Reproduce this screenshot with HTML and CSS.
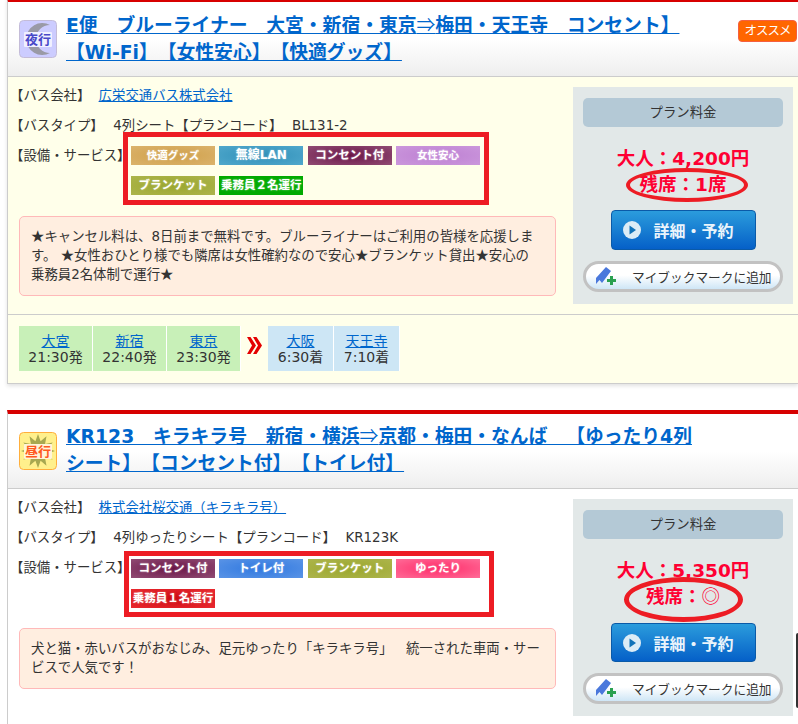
FILE: index.html
```html
<!DOCTYPE html>
<html lang="ja">
<head>
<meta charset="utf-8">
<title>バスプラン一覧</title>
<link rel="stylesheet" href="styles.css">
</head>
<body>
<section class="card card--first">
  <header class="head">
    <svg class="kind" viewBox="0 0 38 38" aria-hidden="true">
      <rect x="0.5" y="0.5" width="37" height="37" rx="4" fill="#ccccff" stroke="#c4bcd8"/>
      <path d="M31 5 A16 16 0 1 0 31 33 A13 13 0 0 1 31 5Z" fill="#9a9aa6"/>
      <rect x="5" y="12" width="28" height="15" rx="1" fill="#f0f0ff"/>
      <text x="19" y="24" class="kind-text kind-text--night">夜行</text>
    </svg>
    <h2 class="title"><a href="#">E便　ブルーライナー　大宮・新宿・東京<span class="cjk cjk--thin">⇒</span>梅田・天王寺　コンセント】【Wi-Fi】【女性安心】【快適グッズ】</a></h2>
    <span class="badge">オススメ</span>
  </header>
  <div class="body">
    <div class="info">
      <p class="row row--company">【バス会社】 <a class="company" href="#">広栄交通バス株式会社</a></p>
      <p class="row row--type">【バスタイプ】<span class="gap"></span>4列シート【プランコード】<span class="gap"></span>BL131-2</p>
      <div class="service">
        <span class="service-label">【設備・サービス】</span>
        <div class="mark mark--one">
          <span class="tag tag--goods">快適グッズ</span>
          <span class="tag tag--lan">無線LAN</span>
          <span class="tag tag--plug">コンセント付</span>
          <span class="tag tag--women">女性安心</span>
          <span class="tag tag--blanket">ブランケット</span>
          <span class="tag tag--crew2">乗務員２名運行</span>
        </div>
      </div>
      <p class="note note--one"><span class="cjk">★</span>キャンセル料は、8日前まで無料です。ブルーライナーはご利用の皆様を応援します。 <span class="cjk">★</span>女性おひとり様でも隣席は女性確約なので安心<span class="cjk">★</span>ブランケット貸出<span class="cjk">★</span>安心の乗務員2名体制で運行<span class="cjk">★</span></p>
    </div>
    <aside class="plan">
      <div class="plan-label">プラン料金</div>
      <div class="price">大人：4,200円</div>
      <div class="seats">残席：1席</div>
      <span class="ring ring--one"></span>
      <a class="reserve" href="#">
        <svg class="play" viewBox="0 0 18 18" aria-hidden="true"><circle cx="9" cy="9" r="9" fill="#dcecf6"/><path d="M6.5 4.5 L13 9 L6.5 13.5Z" fill="#1273b8"/></svg>
        <span>詳細・予約</span>
      </a>
      <a class="bookmark" href="#">
        <svg class="pen" viewBox="0 0 22 22" aria-hidden="true"><path d="M2 12 L12 1 L17 5 L8 17 L5.500 14 L2 18Z" fill="#4a78dc"/><path d="M13 13h3v-3h3v3h3v3h-3v3h-3v-3h-3z" fill="#2aa050"/></svg>
        <span>マイブックマークに追加</span>
      </a>
    </aside>
  </div>
  <div class="route">
    <div class="stop stop--from"><a href="#">大宮</a><span>21:30発</span></div>
    <div class="stop stop--from"><a href="#">新宿</a><span>22:40発</span></div>
    <div class="stop stop--from"><a href="#">東京</a><span>23:30発</span></div>
    <svg class="arrow" viewBox="0 0 15 17" aria-hidden="true"><path d="M0 0h3.5L9 8.5 3.500 17H0l5-8.500z M6 0h3.500L15 8.500 9.500 17H6l5-8.500z" fill="#e40000"/></svg>
    <div class="stop stop--to"><a href="#">大阪</a><span>6:30着</span></div>
    <div class="stop stop--to"><a href="#">天王寺</a><span>7:10着</span></div>
  </div>
</section>

<section class="card card--second">
  <header class="head head--tight">
    <svg class="kind" viewBox="0 0 38 38" aria-hidden="true">
      <rect x="0.5" y="0.5" width="37" height="37" rx="4" fill="#fff08c" stroke="#ffae3c"/>
      <polygon points="36,19 28.66,21.59 33.7,27.5 26.07,26.07 27.5,33.7 21.59,28.66 19,36 16.41,28.66 10.5,33.7 11.93,26.07 4.3,27.5 9.34,21.59 2,19 9.34,16.41 4.3,10.5 11.93,11.93 10.5,4.3 16.41,9.34 19,2 21.59,9.34 27.5,4.3 26.07,11.93 33.7,10.5 28.66,16.41" fill="#a8a850"/>
      <rect x="5" y="12" width="28" height="15" rx="1" fill="#fff4d8"/>
      <text x="19" y="24" class="kind-text kind-text--day">昼行</text>
    </svg>
    <h2 class="title"><a href="#">KR123　キラキラ号　新宿・横浜<span class="cjk cjk--thin">⇒</span>京都・梅田・なんば　【ゆったり4列シート】【コンセント付】【トイレ付】</a></h2>
  </header>
  <div class="body body--white">
    <div class="info">
      <p class="row row--company">【バス会社】 <a class="company" href="#">株式会社桜交通（キラキラ号）</a></p>
      <p class="row row--type">【バスタイプ】<span class="gap"></span>4列ゆったりシート【プランコード】<span class="gap"></span>KR123K</p>
      <div class="service">
        <span class="service-label">【設備・サービス】</span>
        <div class="mark mark--two">
          <span class="tag tag--plug">コンセント付</span>
          <span class="tag tag--toilet">トイレ付</span>
          <span class="tag tag--blanket">ブランケット</span>
          <span class="tag tag--relax">ゆったり</span>
          <span class="tag tag--crew1">乗務員１名運行</span>
        </div>
      </div>
      <p class="note note--two">犬と猫・赤いバスがおなじみ、足元ゆったり「キラキラ号」　統一された車両・サービスで人気です！</p>
    </div>
    <aside class="plan">
      <div class="plan-label">プラン料金</div>
      <div class="price">大人：5,350円</div>
      <div class="seats">残席：<span class="cjk cjk--thin">◎</span></div>
      <span class="ring ring--two"></span>
      <a class="reserve reserve--short" href="#">
        <svg class="play" viewBox="0 0 18 18" aria-hidden="true"><circle cx="9" cy="9" r="9" fill="#dcecf6"/><path d="M6.500 4.500 L13 9 L6.500 13.500Z" fill="#1273b8"/></svg>
        <span>詳細・予約</span>
      </a>
      <a class="bookmark" href="#">
        <svg class="pen" viewBox="0 0 22 22" aria-hidden="true"><path d="M2 12 L12 1 L17 5 L8 17 L5.500 14 L2 18Z" fill="#4a78dc"/><path d="M13 13h3v-3h3v3h3v3h-3v3h-3v-3h-3z" fill="#2aa050"/></svg>
        <span>マイブックマークに追加</span>
      </a>
    </aside>
  </div>
</section>
<span class="edge"></span>
</body>
</html>
```
FILE: styles.css
```css
html, body {
  margin: 0;
  height: 724px;
  overflow: hidden;
  background: #fff;
}
body {
  position: relative;
  font-family: "DejaVu Sans", "Noto Sans CJK JP", sans-serif;
  font-size: 13.4px;
  color: #333;
  text-spacing-trim: space-all;
}
a { color: #0066cc; }
p { margin: 0; }
.cjk { font-family: "Noto Sans CJK JP", sans-serif; line-height: 0; }
.cjk--thin { font-weight: 400; }
.gap { display: inline-block; width: 9.500px; }

.card {
  margin-left: 7px;
  border-left: 1px solid #ccc;
  border-top: 4px solid #d70000;
}
.card--first {
  margin-top: -2px;
  border-bottom: 1px solid #ccc;
  box-shadow: 0 2px 4px rgba(0, 0, 0, 0.12);
}
.card--second { margin-top: 26px; }

.head {
  display: flex;
  align-items: flex-start;
  height: 75px;
  box-sizing: border-box;
  padding: 10px 1px 0 11px;
  background: linear-gradient(#fff 50%, #eee);
  border-bottom: 1px solid #ccc;
}
.head--tight { padding-top: 9px; }
.kind {
  flex: none;
  width: 38px;
  height: 38px;
  margin: 8px 9px 0 0;
}
.head--tight .kind { margin-top: 9px; }
.kind-text {
  font-size: 13px;
  font-weight: 700;
  text-anchor: middle;
}
.kind-text--night { fill: #4848c8; }
.kind-text--day { fill: #ff5a20; }
.title {
  flex: none;
  width: 632px;
  margin: 0;
  font-size: 18.800px;
  line-height: 27px;
  font-weight: 700;
}
.badge {
  margin: 8px 0 0 auto;
  width: 59px;
  height: 22px;
  box-sizing: border-box;
  border: 1px solid #f56040;
  border-radius: 4px;
  background: #ff6600;
  color: #fff;
  font-size: 12.500px;
  letter-spacing: -1px;
  line-height: 20px;
  text-align: center;
}

.body {
  display: flex;
  background: #ffffea;
  height: 237px;
}
.body--white { background: #fff; height: 235px; }
.info {
  width: 565px;
  flex: none;
  box-sizing: border-box;
  padding-left: 2px;
}
.row--company {
  line-height: 20px;
  margin-top: 9px;
}
.row--type {
  line-height: 13px;
  margin-top: 13px;
  white-space: nowrap;
}
.company { margin-left: 4px; }
.service {
  display: flex;
  align-items: flex-start;
}
.service-label {
  flex: none;
  width: 113px;
  line-height: 20px;
  padding-top: 14px;
  white-space: nowrap;
}
.mark {
  display: flex;
  flex-wrap: wrap;
  align-content: flex-start;
  gap: 11px 4.33px;
  box-sizing: border-box;
  border: 5px solid #ed1c24;
  padding-left: 3px;
}
.mark--one { width: 366px; height: 73px; padding-top: 9px; }
.mark--two {
  width: 370px;
  height: 66px;
  margin-left: 1px;
  margin-top: 7px;
  padding-top: 3px;
  padding-left: 2px;
}
.tag {
  width: 84px;
  height: 19px;
  color: #fff;
  font-size: 11.500px;
  font-weight: 700;
  line-height: 19px;
  text-align: center;
  white-space: nowrap;
  text-shadow: 0 0 2px rgba(255, 255, 255, 0.5);
}
.tag--goods { font-size: 10.500px; background: radial-gradient(ellipse at center, #cf9f48, #dbb36c); }
.tag--lan { font-size: 12px; background: radial-gradient(ellipse at center, #2f8fb8, #50a8cc); }
.tag--plug { background: radial-gradient(ellipse at center, #6a1446, #914c74); }
.tag--women { font-size: 10.500px; background: radial-gradient(ellipse at center, #bd7fd2, #cb97dc); }
.tag--blanket { background: radial-gradient(ellipse at center, #9aa62c, #adb54c); }
.tag--crew2 { background: #00aa00; }
.tag--toilet { background: radial-gradient(ellipse at center, #2f78e0, #5a94e6); }
.tag--relax { background: radial-gradient(ellipse at center, #ff2a68, #ff6c98); }
.tag--crew1 { background: radial-gradient(ellipse at center, #cc0810, #ea2a30); }

.note {
  box-sizing: border-box;
  width: 537px;
  margin: 11px 0 0 9px;
  border: 1px solid #ffb9b9;
  border-radius: 5px;
  background: #ffeee0;
  padding: 10px 14px 0 11px;
  line-height: 19px;
}
.note--one { height: 80px; }
.note--two { height: 61px; }

.plan {
  position: relative;
  flex: none;
  box-sizing: border-box;
  width: 220px;
  height: 217px;
  margin-top: 10px;
  padding: 11px 10px 0;
  background: #e2e8e8;
}
.plan-label {
  height: 29px;
  border-radius: 5px;
  background: #b4c9d6;
  line-height: 29px;
  text-align: center;
}
.price, .seats {
  color: #ff0033;
  font-size: 18.500px;
  font-weight: 700;
  line-height: 26px;
  text-align: center;
}
.price { margin-top: 19px; }
.ring {
  position: absolute;
  box-sizing: border-box;
  border: 4px solid #ed1c24;
  border-radius: 50%;
}
.ring--one { left: 53px; top: 81px; width: 122px; height: 34px; }
.ring--two { left: 51px; top: 78px; width: 119px; height: 45px; border-width: 5px; }
.reserve {
  display: flex;
  align-items: center;
  box-sizing: border-box;
  width: 145px;
  height: 40px;
  margin: 12px auto 0;
  padding-left: 11px;
  border: 1px solid #0a5aa8;
  border-radius: 4px;
  background: linear-gradient(#2b9cdc, #0560c8);
  color: #eaf4fb;
  font-size: 16px;
  font-weight: 700;
  text-decoration: none;
}
.reserve--short { height: 39px; margin-top: 13px; }
.play { width: 18px; height: 18px; margin-right: 13px; }
.bookmark {
  display: flex;
  align-items: center;
  box-sizing: border-box;
  height: 31px;
  margin-top: 11px;
  padding-left: 8px;
  border: 3px solid #c2c2c2;
  border-radius: 16px;
  background: linear-gradient(#fff 45%, #cfe6f6);
  color: #333;
  font-size: 12.700px;
  text-decoration: none;
  white-space: nowrap;
}
.pen { width: 22px; height: 22px; margin-right: 16px; }

.route {
  display: flex;
  align-items: flex-start;
  height: 69px;
  box-sizing: border-box;
  padding: 11px 0 0 11px;
  border-top: 1px solid #ccc;
  background: #ffffea;
}
.stop {
  display: flex;
  flex-direction: column;
  align-items: center;
  box-sizing: border-box;
  height: 45px;
  padding-top: 7px;
  border-right: 1px solid #fff;
  font-size: 14px;
  line-height: 16px;
}
.stop--from { width: 74px; background: #c8f0b8; }
.stop--to { width: 66px; background: #cde6f5; }
.arrow {
  width: 15px;
  height: 17px;
  margin: 11px 6px 0 6px;
}
.edge {
  position: absolute;
  top: 633px;
  right: 0;
  width: 2px;
  height: 75px;
  background: #333;
  border-radius: 2px 0 0 2px;
}
```
